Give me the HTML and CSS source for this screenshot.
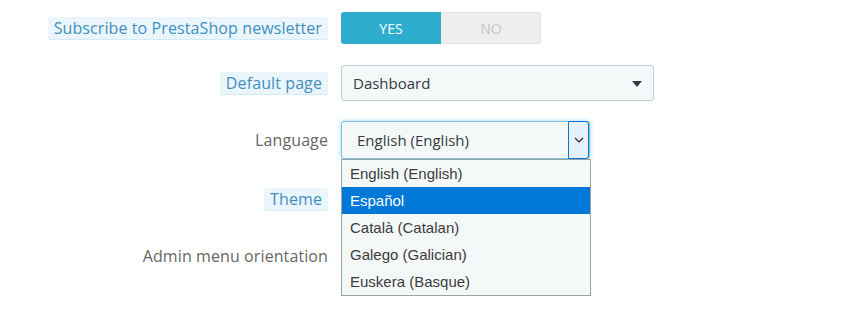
FILE: index.html
```html
<!DOCTYPE html>
<html>
	<head>
		<title>Employee preferences</title>
		<meta charset="UTF-8"/>
		<link rel="stylesheet" href="styles.css">
	</head>
	<body>
		<form class="form">

		  <div class="row row-news">
			<div class="label"><span class="tip">Subscribe to PrestaShop newsletter</span></div>
			<div class="switch">
			  <span class="switch-on">YES</span>
			  <span class="switch-off">NO</span>
			</div>
		  </div>

		  <div class="row row-page">
			<div class="label"><span class="tip">Default page</span></div>
			<div class="select">
			  <span>Dashboard</span>
			  <span class="caret"></span>
			</div>
		  </div>

		  <div class="row row-lang">
			<div class="label">Language</div>
			<div class="lang">
			  <div class="select select-focus">
				<span>English (English)</span>
				<span class="arrow">
				  <svg width="10" height="6" viewBox="0 0 10 6"><path d="M1 1 L5 5 L9 1" fill="none" stroke="#222" stroke-width="1.2"/></svg>
				</span>
			  </div>
			  <ul class="menu">
				<li>English (English)</li>
				<li class="active">Español</li>
				<li>Català (Catalan)</li>
				<li>Galego (Galician)</li>
				<li>Euskera (Basque)</li>
			  </ul>
			</div>
		  </div>

		  <div class="row row-theme">
			<div class="label"><span class="tip">Theme</span></div>
		  </div>

		  <div class="row row-menu">
			<div class="label">Admin menu orientation</div>
		  </div>

		</form>
	</body>
</html>
```

FILE: styles.css
```css
* {
  box-sizing: border-box;
}

body {
  margin: 0;
  min-height: 310px;
  background: #fff;
  font-family: "Open Sans", sans-serif;
  font-size: 15px;
  color: #363a41;
}

.form {
  padding-top: 12px;
}

.row {
  display: flex;
  align-items: center;
  gap: 13px;
}

.row-news { height: 32px; }
.row-page { height: 36px; margin-top: 21px; }
.row-lang { height: 38px; margin-top: 20px; }
.row-theme { height: 38px; margin-top: 21px; }
.row-menu { height: 38px; margin-top: 19px; }

.label {
  width: 328px;
  flex: none;
  text-align: right;
  color: #666;
  font-size: 16px;
  letter-spacing: 0.1px;
  line-height: 22px;
}

.tip {
  display: inline-block;
  padding: 0 6px;
  height: 23px;
  line-height: 22px;
  background: #ebf6fc;
  border-bottom: 1px solid #d3ebf6;
  border-radius: 3px;
  color: #3f8fc3;
}

.switch {
  display: flex;
  width: 200px;
  height: 32px;
  border-radius: 3px;
  overflow: hidden;
  background: #eee;
  box-shadow: inset 0 0 0 1px #e2e2e2;
  font-size: 14px;
}

.switch span {
  flex: 1;
  display: flex;
  align-items: center;
  justify-content: center;
}

.switch-on {
  background: #2eacce;
  color: #fff;
}

.switch-off {
  color: #c4c4c4;
}

.select {
  position: relative;
  display: flex;
  align-items: center;
  width: 313px;
  height: 36px;
  padding-left: 11px;
  background: #f5f8f9;
  border: 1px solid #bbcdd2;
  border-radius: 3px;
}

.caret {
  position: absolute;
  right: 11px;
  top: 15px;
  width: 0;
  height: 0;
  border-left: 5px solid transparent;
  border-right: 5px solid transparent;
  border-top: 6px solid #363a41;
}

.lang {
  position: relative;
}

.select-focus {
  width: 249px;
  height: 38px;
  padding-left: 15px;
  border-color: #7cc0e6;
  box-shadow: 0 0 4px rgba(60, 160, 220, 0.45);
}

.arrow {
  position: absolute;
  right: 0;
  top: -1px;
  width: 21px;
  height: 38px;
  display: flex;
  align-items: center;
  justify-content: center;
  background: #e5f1fb;
  border: 1px solid #0078d7;
  border-radius: 0 3px 3px 0;
}

.menu {
  position: absolute;
  left: 0;
  top: 38px;
  width: 250px;
  margin: 0;
  padding: 0;
  list-style: none;
  background: #f5f8f9;
  border: 1px solid #a0a0a0;
  font-family: "Liberation Sans", Arial, sans-serif;
  font-size: 15px;
  color: #3c3c3c;
}

.menu li {
  height: 27px;
  line-height: 27px;
  padding-left: 8px;
}

.menu .active {
  background: #0078d7;
  color: #fff;
}
```
